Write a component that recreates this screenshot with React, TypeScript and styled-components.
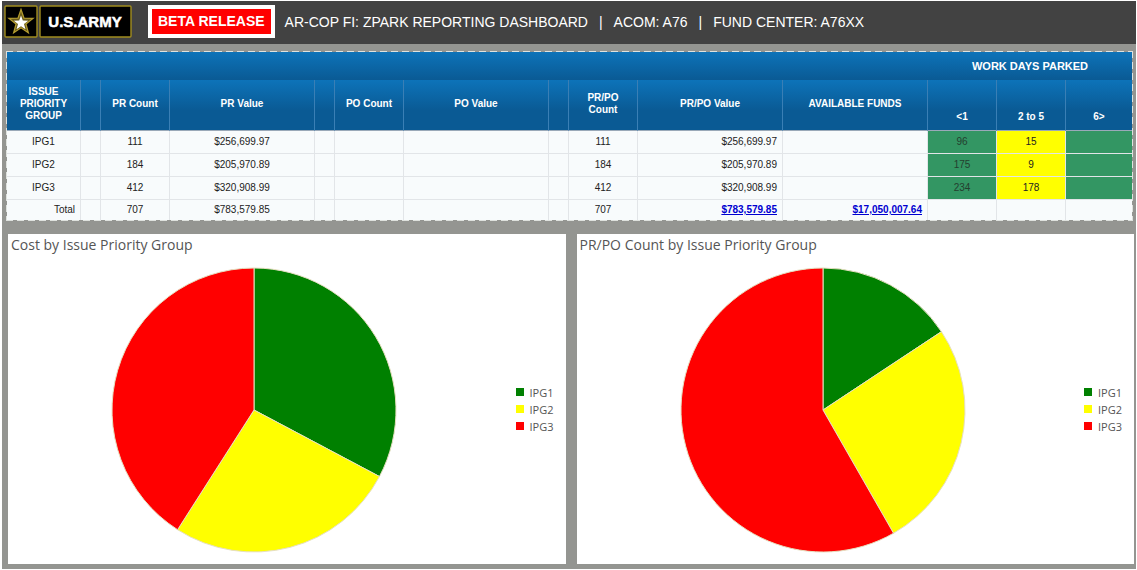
import React from "react";
import styled, { createGlobalStyle, css } from "styled-components";

const GlobalStyle = createGlobalStyle`
  * { box-sizing: border-box; }
  body {
    margin: 0;
    background: #ffffff;
    font-family: "Liberation Sans", Arial, sans-serif;
  }
`;

const Page = styled.div`
  margin: 1px 1px 1px 2px;
  background: #949591;
`;

const Header = styled.header`
  display: flex;
  align-items: center;
  height: 43px;
  padding: 0 2px 2px;
  background: #424242;
`;

const Logo = styled.svg`
  flex: none;
  display: block;
  width: 128px;
  height: 33px;
`;

const BetaBadge = styled.strong`
  flex: none;
  margin: 0 10px 0 16px;
  padding: 0 6px;
  border: 4px solid #ffffff;
  background: #ff0000;
  color: #ffffff;
  font-size: 14px;
  line-height: 25px;
`;

const HeaderTitle = styled.h1`
  display: flex;
  gap: 11px;
  margin: 0;
  color: #ffffff;
  font-size: 14px;
  line-height: 20px;
  font-weight: 400;
  white-space: nowrap;
`;

const Main = styled.main`
  padding: 7px 2px 5px 4px;
`;

const dash = "#dfe2de 0 7px, #949591 7px 11px";

const TableFrame = styled.div`
  margin-right: 1px;
  padding: 1px;
  background:
    repeating-linear-gradient(90deg, ${dash}) top / 100% 1px no-repeat,
    repeating-linear-gradient(90deg, ${dash}) bottom / 100% 1px no-repeat,
    repeating-linear-gradient(${dash}) left / 1px 100% no-repeat,
    repeating-linear-gradient(${dash}) right / 1px 100% no-repeat;
`;

const DataTable = styled.table`
  width: 100%;
  table-layout: fixed;
  border-collapse: separate;
  border-spacing: 0;
  font-size: 10px;
  line-height: 12px;
  color: #222222;
`;

const BannerRow = styled.tr`
  height: 28px;
  background: linear-gradient(#0d73b9, #0a5a94);
`;

const HeadingRow = styled.tr`
  height: 51px;
  background: linear-gradient(#0d73b9, #0a5a94 60%);
`;

const BodyRow = styled.tr<{ $height: number }>`
  height: ${(p) => p.$height}px;
`;

const BannerCell = styled.th`
  padding: 0;
  color: #ffffff;
  font-size: 11px;
`;

const HeadCell = styled.th<{ $low?: boolean }>`
  padding: ${(p) => (p.$low ? "0 0 7px" : "0 4px 2px")};
  border-right: 1px solid #3a7fb5;
  border-bottom: 1px solid #9aa9b8;
  color: #ffffff;
  vertical-align: ${(p) => (p.$low ? "bottom" : "middle")};
  &:last-child { border-right: 0; }
`;

type Tone = "plain" | "green" | "yellow";

const tones = {
  plain: css`background: #f8fbfc;`,
  green: css`background: #339663; color: #24402f;`,
  yellow: css`background: #ffff00;`,
};

const Cell = styled.td<{ $align?: "center" | "right"; $tone?: Tone }>`
  padding: 0 5px;
  border-right: 1px solid #e2e5e8;
  border-bottom: 1px solid #e2e5e8;
  text-align: ${(p) => p.$align ?? "center"};
  ${(p) => tones[p.$tone ?? "plain"]}
  &:last-child { border-right: 0; }
  tr:last-child > & { border-bottom: 0; }
`;

const TotalLink = styled.a`
  color: #0000d0;
  font-weight: 700;
`;

const Charts = styled.section`
  display: grid;
  grid-template-columns: 1fr 1fr;
  gap: 11px;
  margin: 13px 0 0 2px;
`;

const ChartCard = styled.article`
  min-width: 0;
  height: 330px;
  background: #ffffff;
`;

const ChartTitle = styled.h2`
  margin: 0;
  padding: 2px 3px 0;
  color: #555555;
  font-family: "Open Sans", "Noto Sans", sans-serif;
  font-size: 14px;
  line-height: 18px;
  font-weight: 400;
`;

const ChartBody = styled.div`
  display: flex;
  align-items: center;
  gap: 15px;
  padding: 13px 12px 0 0;
`;

const PieArea = styled.div`
  flex: 1;
  min-width: 0;
  display: flex;
  justify-content: center;
`;

const PieDrawing = styled.svg`
  display: block;
  width: 286px;
  height: 286px;
`;

const Legend = styled.ul`
  margin: 0;
  padding: 0 0 2px;
  list-style: none;
  color: #555555;
  font-family: "Open Sans", "Noto Sans", sans-serif;
  font-size: 11px;
  line-height: 17px;
`;

const LegendItem = styled.li`
  display: flex;
  align-items: center;
  gap: 6px;
`;

const Swatch = styled.span<{ $color: string }>`
  width: 8px;
  height: 8px;
  background: ${(p) => p.$color};
`;

const columnWidths = [74, 20, 69, 145, 20, 69, 145, 20, 69, 145, 145, 69, 69, 66];

const rows = [
  { group: "IPG1", count: "111", value: "$256,699.97", days: ["96", "15", ""] },
  { group: "IPG2", count: "184", value: "$205,970.89", days: ["175", "9", ""] },
  { group: "IPG3", count: "412", value: "$320,908.99", days: ["234", "178", ""] },
];

const dayTones: Tone[] = ["green", "yellow", "green"];

const groups = [
  { name: "IPG1", color: "#008000" },
  { name: "IPG2", color: "#ffff00" },
  { name: "IPG3", color: "#ff0000" },
];

function ArmyLogo() {
  return (
    <Logo viewBox="0 0 128 33" role="img" aria-label="U.S. Army">
      <rect x="1" y="1" width="32" height="31" rx="1" fill="#000" stroke="#a18d1f" strokeWidth="1.4" />
      <path
        d="M17 4.5l3 8.6 9 .3-7.1 5.6 2.4 8.7L17 22.7l-7.3 5 2.4-8.7L5 13.4l9-.3z"
        fill="#6b5c1c"
        stroke="#b39c30"
        strokeWidth="1.3"
      />
      <path
        d="M17 10.5l1.8 5 5.4.2-4.2 3.3 1.5 5.2-4.5-3-4.5 3 1.5-5.2-4.2-3.3 5.4-.2z"
        fill="#fff"
      />
      <rect x="36" y="1" width="91" height="31" rx="1" fill="#000" stroke="#a18d1f" strokeWidth="1.4" />
      <text
        x="81"
        y="22"
        textAnchor="middle"
        fill="#fff"
        stroke="#fff"
        strokeWidth=".5"
        fontFamily="'Liberation Sans Narrow', 'Liberation Sans', sans-serif"
        fontWeight="700"
        fontSize="15"
      >
        U.S.ARMY
      </text>
    </Logo>
  );
}

function Pie({ values, label }: { values: number[]; label: string }) {
  const total = values.reduce((a, b) => a + b, 0);
  const point = (share: number) => {
    const angle = share * 2 * Math.PI;
    return `${143 + 142 * Math.sin(angle)} ${143 - 142 * Math.cos(angle)}`;
  };
  let passed = 0;
  return (
    <PieDrawing viewBox="0 0 286 286" role="img" aria-label={label}>
      {values.map((value, i) => {
        const start = passed / total;
        passed += value;
        const end = passed / total;
        const large = end - start > 0.5 ? 1 : 0;
        return (
          <path
            key={groups[i].name}
            d={`M143 143L${point(start)}A142 142 0 ${large} 1 ${point(end)}Z`}
            fill={groups[i].color}
            stroke="#e6dfc0"
            strokeWidth="1"
            strokeLinejoin="round"
          />
        );
      })}
    </PieDrawing>
  );
}

function Chart({ title, values }: { title: string; values: number[] }) {
  return (
    <ChartCard>
      <ChartTitle>{title}</ChartTitle>
      <ChartBody>
        <PieArea>
          <Pie values={values} label={title} />
        </PieArea>
        <Legend>
          {groups.map((g) => (
            <LegendItem key={g.name}>
              <Swatch $color={g.color} />
              {g.name}
            </LegendItem>
          ))}
        </Legend>
      </ChartBody>
    </ChartCard>
  );
}

export default function App() {
  return (
    <>
      <GlobalStyle />
      <Page>
        <Header>
          <ArmyLogo />
          <BetaBadge>BETA RELEASE</BetaBadge>
          <HeaderTitle>
            <span>AR-COP FI: ZPARK REPORTING DASHBOARD</span>
            <span>|</span>
            <span>ACOM: A76</span>
            <span>|</span>
            <span>FUND CENTER: A76XX</span>
          </HeaderTitle>
        </Header>
        <Main>
          <TableFrame>
            <DataTable>
              <colgroup>
                {columnWidths.map((w, i) => (
                  <col key={i} width={w} />
                ))}
              </colgroup>
              <thead>
                <BannerRow>
                  <BannerCell colSpan={11} />
                  <BannerCell colSpan={3}>WORK DAYS PARKED</BannerCell>
                </BannerRow>
                <HeadingRow>
                  <HeadCell>ISSUE PRIORITY GROUP</HeadCell>
                  <HeadCell />
                  <HeadCell>PR Count</HeadCell>
                  <HeadCell>PR Value</HeadCell>
                  <HeadCell />
                  <HeadCell>PO Count</HeadCell>
                  <HeadCell>PO Value</HeadCell>
                  <HeadCell />
                  <HeadCell>
                    PR/PO
                    <br />
                    Count
                  </HeadCell>
                  <HeadCell>PR/PO Value</HeadCell>
                  <HeadCell>AVAILABLE FUNDS</HeadCell>
                  <HeadCell $low>&lt;1</HeadCell>
                  <HeadCell $low>2 to 5</HeadCell>
                  <HeadCell $low>6&gt;</HeadCell>
                </HeadingRow>
              </thead>
              <tbody>
                {rows.map((r) => (
                  <BodyRow key={r.group} $height={23}>
                    <Cell>{r.group}</Cell>
                    <Cell />
                    <Cell>{r.count}</Cell>
                    <Cell>{r.value}</Cell>
                    <Cell />
                    <Cell />
                    <Cell />
                    <Cell />
                    <Cell>{r.count}</Cell>
                    <Cell $align="right">{r.value}</Cell>
                    <Cell />
                    {r.days.map((d, i) => (
                      <Cell key={i} $tone={dayTones[i]}>
                        {d}
                      </Cell>
                    ))}
                  </BodyRow>
                ))}
                <BodyRow $height={20}>
                  <Cell $align="right">Total</Cell>
                  <Cell />
                  <Cell>707</Cell>
                  <Cell>$783,579.85</Cell>
                  <Cell />
                  <Cell />
                  <Cell />
                  <Cell />
                  <Cell>707</Cell>
                  <Cell $align="right">
                    <TotalLink href="#value">$783,579.85</TotalLink>
                  </Cell>
                  <Cell $align="right">
                    <TotalLink href="#funds">$17,050,007.64</TotalLink>
                  </Cell>
                  <Cell />
                  <Cell />
                  <Cell />
                </BodyRow>
              </tbody>
            </DataTable>
          </TableFrame>
          <Charts>
            <Chart title="Cost by Issue Priority Group" values={[256699.97, 205970.89, 320908.99]} />
            <Chart title="PR/PO Count by Issue Priority Group" values={[111, 184, 412]} />
          </Charts>
        </Main>
      </Page>
    </>
  );
}
